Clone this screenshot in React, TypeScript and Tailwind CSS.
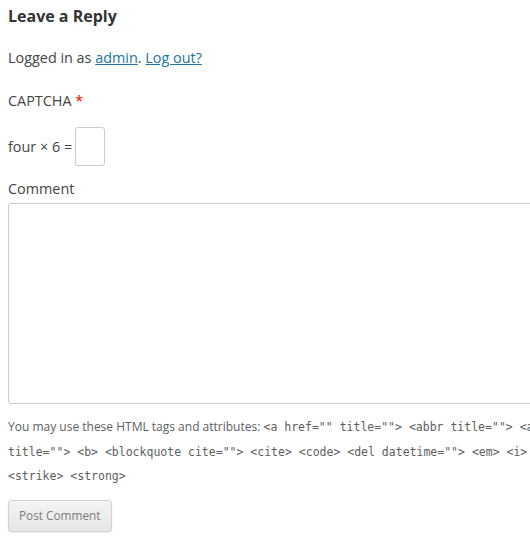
export default function App() {
  return (
    <div className="w-[530px] h-[538px] overflow-hidden bg-white">
      <div className="w-[636px] px-2 pt-1 font-['Open_Sans',sans-serif] text-[14.4px] text-[#444]">
        <h3 className="text-[16px] leading-6 font-bold text-[#333]">Leave a Reply</h3>
        <p className="mt-[18px] leading-6">
          Logged in as{' '}
          <a href="#" className="text-[#21759b] underline">admin</a>.{' '}
          <a href="#" className="text-[#21759b] underline">Log out?</a>
        </p>
        <p className="mt-[19px] leading-6">
          CAPTCHA <span className="text-[#ff0000]">*</span>
        </p>
        <div className="mt-[14px] flex items-center gap-[3px]">
          <span className="leading-6">four × 6 =</span>
          <input
            type="text"
            className="w-[30px] h-[39px] border border-[#ccc] rounded-[3px] outline-none"
          />
        </div>
        <label className="block mt-[11px] leading-6">Comment</label>
        <textarea className="block mt-[2px] w-full h-[201px] border border-[#ccc] rounded-[3px] outline-none resize-none" />
        <p className="mt-[11px] text-[12px] leading-[24.5px] text-[#5e5e5e]">
          You may use these HTML tags and attributes:{' '}
          <code className="font-['DejaVu_Sans_Mono',monospace] text-[11.5px]">
            {'<a href="" title=""> <abbr title=""> <acronym title=""> <b> <blockquote cite=""> <cite> <code> <del datetime=""> <em> <i> <q cite=""> <strike> <strong>'}
          </code>
        </p>
        <button className="mt-[11px] h-[32px] px-[10px] text-[11.8px] text-[#7c7c7c] border border-[#d2d2d2] rounded-[3px] bg-gradient-to-b from-[#f4f4f4] to-[#e6e6e6] shadow-[0_1px_2px_rgba(64,64,64,0.1)]">
          Post Comment
        </button>
      </div>
    </div>
  );
}
